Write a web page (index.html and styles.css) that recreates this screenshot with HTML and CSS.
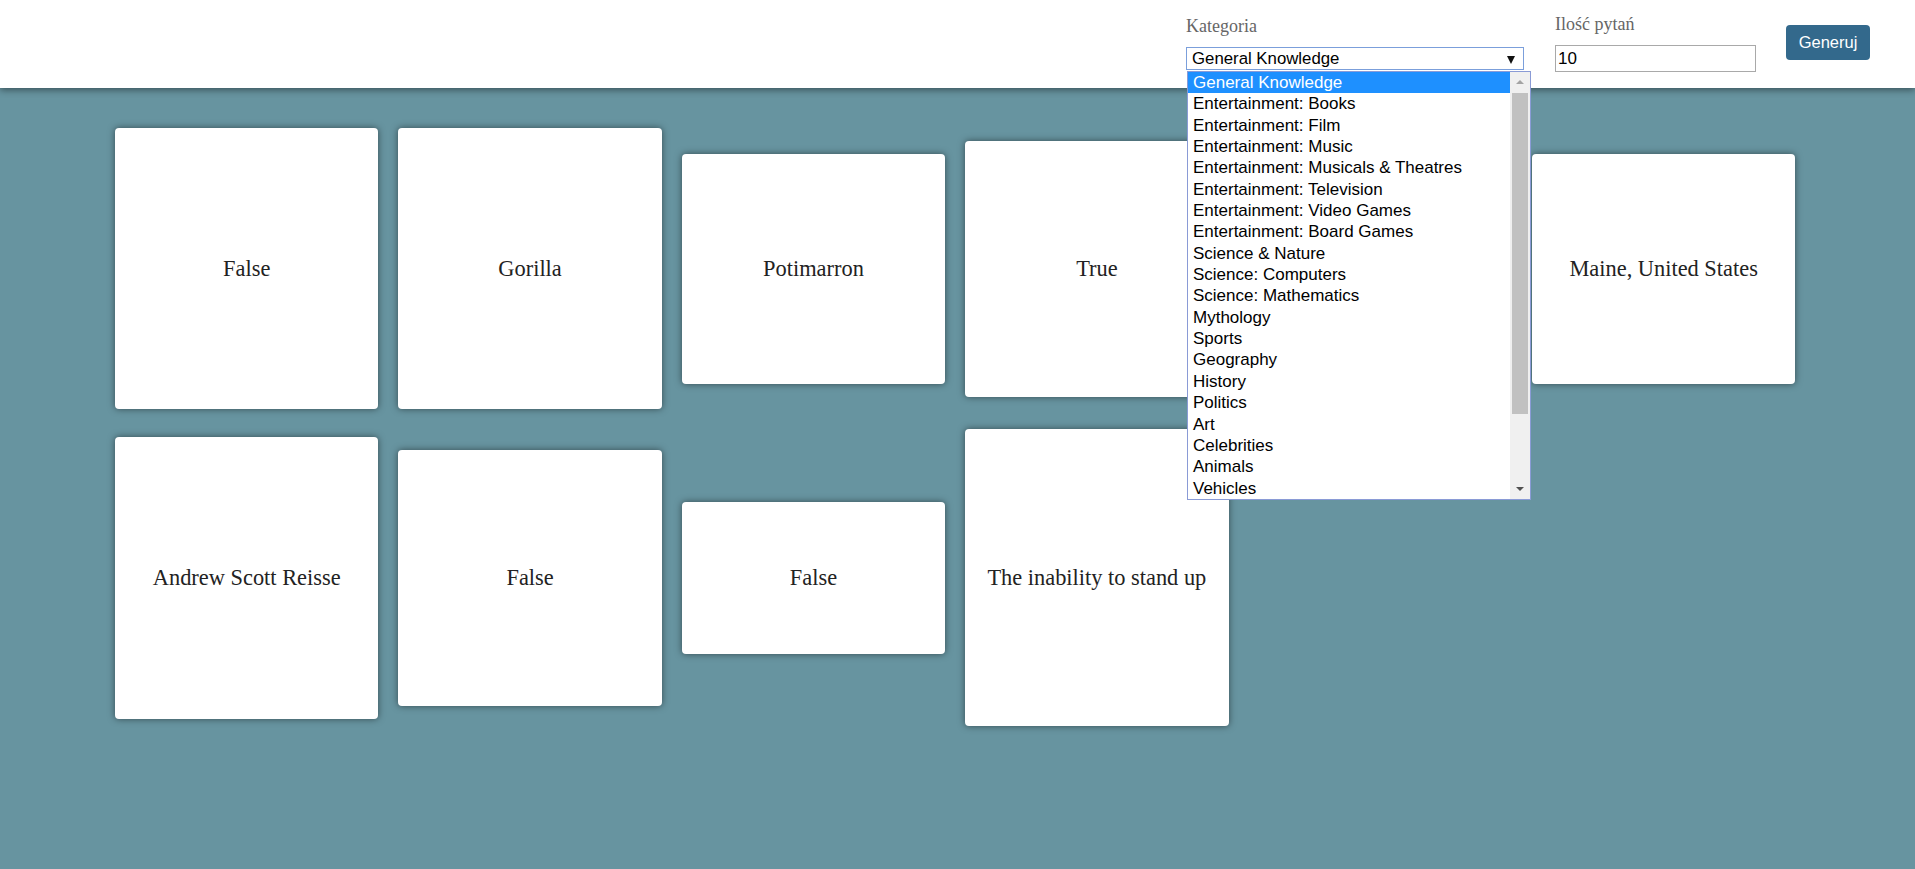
FILE: index.html
```html
<!DOCTYPE html>
<html lang="pl">
<head>
<meta charset="utf-8">
<title>Quiz</title>
<link rel="stylesheet" href="styles.css">
</head>
<body>
<header class="topbar">
  <div class="field field-category">
    <label class="field-label">Kategoria</label>
    <div class="select-box">
      <span class="select-value">General Knowledge</span>
      <span class="select-arrow"></span>
    </div>
    <div class="dropdown">
      <ul class="dropdown-list">
        <li class="option option-active">General Knowledge</li>
        <li class="option">Entertainment: Books</li>
        <li class="option">Entertainment: Film</li>
        <li class="option">Entertainment: Music</li>
        <li class="option">Entertainment: Musicals &amp; Theatres</li>
        <li class="option">Entertainment: Television</li>
        <li class="option">Entertainment: Video Games</li>
        <li class="option">Entertainment: Board Games</li>
        <li class="option">Science &amp; Nature</li>
        <li class="option">Science: Computers</li>
        <li class="option">Science: Mathematics</li>
        <li class="option">Mythology</li>
        <li class="option">Sports</li>
        <li class="option">Geography</li>
        <li class="option">History</li>
        <li class="option">Politics</li>
        <li class="option">Art</li>
        <li class="option">Celebrities</li>
        <li class="option">Animals</li>
        <li class="option">Vehicles</li>
      </ul>
      <div class="scrollbar">
        <span class="scroll-arrow scroll-up"></span>
        <span class="scroll-thumb"></span>
        <span class="scroll-arrow scroll-down"></span>
      </div>
    </div>
  </div>
  <div class="field field-count">
    <label class="field-label">Ilość pytań</label>
    <input class="count-input" type="text" value="10">
  </div>
  <button class="generate-btn">Generuj</button>
</header>

<main class="board">
  <div class="card h-281">False</div>
  <div class="card h-281">Gorilla</div>
  <div class="card h-230">Potimarron</div>
  <div class="card h-256">True</div>
  <div class="card h-256">Canberra</div>
  <div class="card h-230">Maine, United States</div>
  <div class="card h-282">Andrew Scott Reisse</div>
  <div class="card h-256">False</div>
  <div class="card h-152">False</div>
  <div class="card h-297">The inability to stand up</div>
</main>
</body>
</html>
```

FILE: styles.css
```css
html, body {
  margin: 0;
  padding: 0;
}

body {
  background: #6794a0;
  font-family: "Liberation Serif", "Times New Roman", serif;
  min-height: 869px;
}

.topbar {
  position: relative;
  z-index: 2;
  height: 88px;
  box-sizing: border-box;
  background: #ffffff;
  box-shadow: 0 2px 7px rgba(0, 0, 0, 0.45);
  display: flex;
  justify-content: flex-end;
  align-items: flex-start;
  padding: 14px 45px 0 0;
}

.field {
  display: flex;
  flex-direction: column;
}

.field-category {
  position: relative;
  width: 338px;
  margin-top: 2px;
  margin-right: 31px;
}

.field-count {
  width: 201px;
  margin-right: 30px;
}

.field-label {
  font-family: "Liberation Serif", "Times New Roman", serif;
  font-size: 18px;
  line-height: 21px;
  color: #666666;
  margin-bottom: 10px;
}

.select-box {
  height: 23px;
  box-sizing: border-box;
  border: 1px solid #7b9fdb;
  background: #ffffff;
  display: flex;
  align-items: center;
  justify-content: space-between;
  padding: 0 8px 0 5px;
  font-family: "Liberation Sans", Arial, sans-serif;
  font-size: 16.8px;
  color: #000000;
}

.select-arrow {
  width: 0;
  height: 0;
  border-left: 4px solid transparent;
  border-right: 4px solid transparent;
  border-top: 8px solid #111111;
  margin-top: 2px;
}

.dropdown {
  position: absolute;
  left: 1px;
  top: 55px;
  width: 344px;
  height: 429px;
  box-sizing: border-box;
  border: 1px solid #8a9bd6;
  background: #ffffff;
  display: flex;
}

.dropdown-list {
  list-style: none;
  margin: 0;
  padding: 0;
  flex: 1;
  overflow: hidden;
}

.option {
  height: 21.35px;
  line-height: 21.35px;
  padding-left: 5px;
  font-family: "Liberation Sans", Arial, sans-serif;
  font-size: 17px;
  color: #000000;
  white-space: nowrap;
}

.option-active {
  background: #1e90ff;
  color: #ffffff;
}

.scrollbar {
  position: relative;
  width: 20px;
  background: #f0f0f0;
}

.scroll-thumb {
  position: absolute;
  left: 2px;
  right: 2px;
  top: 21px;
  height: 321px;
  background: #c1c1c1;
}

.scroll-arrow {
  position: absolute;
  left: 6px;
  width: 0;
  height: 0;
  border-left: 4px solid transparent;
  border-right: 4px solid transparent;
}

.scroll-up {
  top: 8px;
  border-bottom: 4px solid #a3a3a3;
}

.scroll-down {
  bottom: 8px;
  border-top: 4px solid #505050;
}

.count-input {
  width: 201px;
  height: 27px;
  box-sizing: border-box;
  border: 1px solid #a9a9a9;
  padding: 0 2px;
  margin: 0;
  font-family: "Liberation Sans", Arial, sans-serif;
  font-size: 17px;
  color: #000000;
  outline: none;
}

.generate-btn {
  margin-top: 11px;
  width: 84px;
  height: 35px;
  border: none;
  border-radius: 4px;
  background: #33698c;
  color: #ffffff;
  font-family: "Liberation Sans", Arial, sans-serif;
  font-size: 16.5px;
  padding: 0;
}

.board {
  display: flex;
  flex-wrap: wrap;
  align-items: center;
  width: 1702px;
  margin: 30px 0 0 105px;
}

.card {
  width: 263.4px;
  margin: 10px;
  background: #ffffff;
  border-radius: 4px;
  box-shadow: 0 0 7px rgba(0, 0, 0, 0.5);
  display: flex;
  align-items: center;
  justify-content: center;
  text-align: center;
  font-family: "Liberation Serif", "Times New Roman", serif;
  font-size: 22.4px;
  color: #222222;
}

.h-281 { height: 281px; }
.h-282 { height: 282px; }
.h-230 { height: 230px; }
.h-256 { height: 256px; }
.h-152 { height: 152px; }
.h-297 { height: 297px; }
```
